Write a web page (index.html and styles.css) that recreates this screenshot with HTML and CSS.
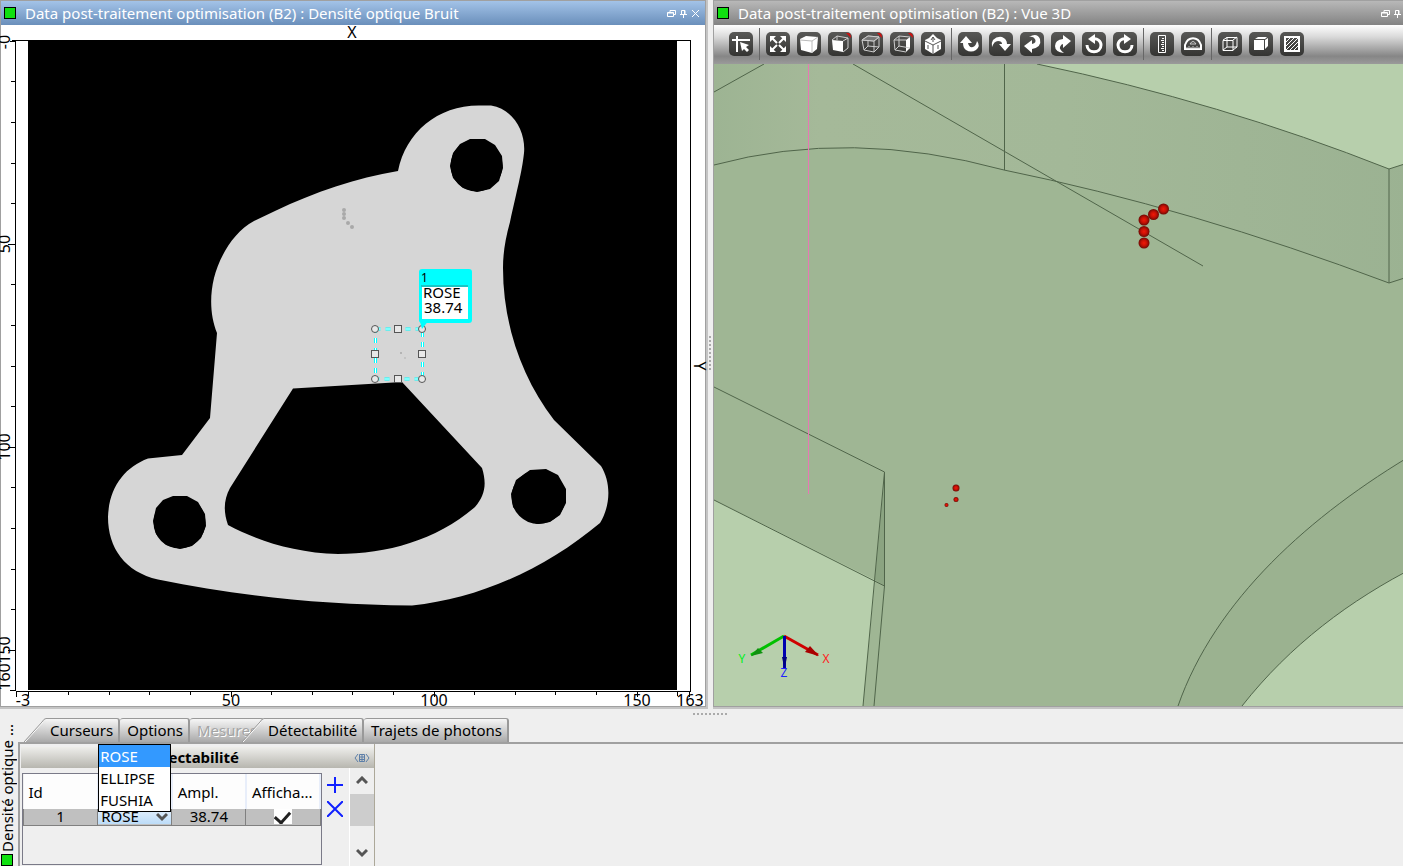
FILE: index.html
```html
<!DOCTYPE html>
<html lang="fr">
  <head>
    <meta charset="UTF-8" />
    <meta name="viewport" content="width=device-width, initial-scale=1.0" />
    <title>Data post-traitement optimisation (B2)</title>
    <link rel="stylesheet" href="styles.css">
  </head>
  <body>
    <main class="views">
      <!-- 2D view -->
      <section class="view view-2d">
        <header class="title-bar active">
          <span class="status"></span>
          <h2>Data post-traitement optimisation (B2) : Densité optique Bruit</h2>
          <div class="window-buttons">
            <button type="button" aria-label="Restaurer"><svg viewBox="0 0 9 9"><path d="M3 3V1.500H8.500V5.500H6.500M.5 3.500H6.500V7.500H.5ZM.5 4H6.500" /></svg></button>
            <button type="button" aria-label="Épingler"><svg viewBox="0 0 9 9"><path d="M2.500 5V1.500H6V5M5.500 1.500V5M1 5.500H8M4.500 5.500V9" /></svg></button>
            <button type="button" aria-label="Fermer"><svg viewBox="0 0 9 9"><path d="M1 1L8 8M8 1L1 8" /></svg></button>
          </div>
        </header>
        <svg class="plot" viewBox="1 25 704 681">
          <rect x="28" y="41" width="649" height="649" />
          <path class="part" fill-rule="evenodd" d="M398 171C406 132 438 105 480 105.500H491C514 109 526 133 524 153C522 172 517 190 510 222C505 240 503 254 503 268C503 325 522 378 554 420L601 466C611 482 611 505 600 523C545 569 478 599 412 605.500C320 605 240 596 158 579.500C125 572 108 548 108 517C109 487 125 467 148 458.500L182 455L210 418L217 333C211 318 209 299 214 278C219 258 233 232 254 221L275 211C315 192 356 178 398 171ZM293 388.500L402 382L482 468C487 484 485 495 475 507C437 540 387 554 338 554C295 553 258 541 228 525C223 511 224 499 230 488Z" />
          <circle cx="476.500" cy="165.500" r="26" /><circle cx="179.500" cy="522.500" r="26" /><circle cx="538.500" cy="497" r="27" />
          <path d="M470 139L485 139L495 145L502 156L503 168L499 181L490 189L477 192L463 188L453 178L450 166L453 153L460 144ZM173 496L187 496L198 502L205 514L206 526L201 538L192 546L180 549L166 545L156 534L153 521L156 508L163 500ZM530 470L546 469L558 475L566 489L566 503L560 515L550 522L537 524L523 518L513 507L511 494L516 480Z" />
          <g class="defects">
            <circle cx="344" cy="210" r="2" /><circle cx="344" cy="214" r="2" /><circle cx="344" cy="218" r="2" />
            <circle cx="348" cy="223" r="2" /><circle cx="352" cy="227" r="2" />
            <circle cx="401" cy="353" r="1" /><circle cx="405" cy="358" r="1" opacity=".5" />
          </g>
          <!-- rulers -->
          <path class="axis" d="M12 40.500H690.500V691.500H16M15.500 41V691M10 41.500H15M11 81.500H15M11 122.500H15M11 163.500H15M11 203.500H15M8 244.500H15M11 284.500H15M11 325.500H15M11 366.500H15M11 406.500H15M8 447.500H15M11 487.500H15M11 528.500H15M11 569.500H15M11 609.500H15M8 650.500H15M10 690.500H15M16.500 692V697M28.500 692V696M68.500 692V695M109.500 692V695M149.500 692V695M190.500 692V695M231.500 692V697M271.500 692V695M312.500 692V695M352.500 692V695M393.500 692V695M434.500 692V697M474.500 692V695M515.500 692V695M555.500 692V695M596.500 692V695M637.500 692V697M677.500 692V696M689.500 692V697" />
          <g class="labels">
            <text x="352" y="38">X</text>
            <text x="23" y="706">-3</text>
            <text x="231" y="706">50</text>
            <text x="434" y="706">100</text>
            <text x="637" y="706">150</text>
            <text x="690" y="706">163</text>
            <text transform="translate(10 42) rotate(-90)">-0</text>
            <text transform="translate(10 244) rotate(-90)">50</text>
            <text transform="translate(10 447) rotate(-90)">100</text>
            <text transform="translate(10 650) rotate(-90)">150</text>
            <text transform="translate(10 677) rotate(-90)">160</text>
            <text transform="translate(694 366) rotate(90)">Y</text>
          </g>
          <!-- selected zone and its label -->
          <rect class="zone-edge" x="375.500" y="329" width="47" height="50" />
          <rect class="zone" x="375.500" y="329" width="47" height="50" />
          <g class="handles">
            <rect x="394.500" y="325.500" width="7" height="7" /><rect x="394.500" y="375.500" width="7" height="7" />
            <rect x="371.500" y="350.500" width="7" height="7" /><rect x="418.500" y="350.500" width="7" height="7" />
            <circle cx="375" cy="329" r="3.500" /><circle cx="422" cy="329" r="3.500" />
            <circle cx="375" cy="379" r="3.500" /><circle cx="422" cy="379" r="3.500" />
          </g>
          <g class="callout">
            <path d="M419 318L422 329L429 320Z" />
            <rect x="419" y="269" width="53" height="54" rx="3" />
            <rect class="callout-body" x="422" y="287" width="46" height="32" />
            <path class="callout-rule" d="M421 286H468" />
            <text class="callout-id" x="421" y="282">1</text>
            <text x="423" y="298">ROSE</text>
            <text x="424" y="313">38.74</text>
          </g>
        </svg>
      </section>

      <div class="splitter"><span class="grip vertical"></span></div>

      <!-- 3D view -->
      <section class="view view-3d">
        <header class="title-bar">
          <span class="status"></span>
          <h2>Data post-traitement optimisation (B2) : Vue 3D</h2>
          <div class="window-buttons">
            <button type="button" aria-label="Restaurer"><svg viewBox="0 0 9 9"><path d="M3 3V1.500H8.500V5.500H6.500M.5 3.500H6.500V7.500H.5ZM.5 4H6.500" /></svg></button>
            <button type="button" aria-label="Épingler"><svg viewBox="0 0 9 9"><path d="M2.500 5V1.500H6V5M5.500 1.500V5M1 5.500H8M4.500 5.500V9" /></svg></button>
          </div>
        </header>
        <div class="toolbar">
          <div class="tools">
            <button type="button" aria-label="Sélection"><svg viewBox="0 0 24 24"><path class="thick" d="M3 8H21M8 4V20" /><path class="solid" d="M11 10L20 13L17 15L20 18L18 20L15 17L13 19Z" /></svg></button>
          </div>
          <div class="tools">
            <button type="button" aria-label="Ajuster"><svg viewBox="0 0 24 24"><path class="solid" d="M4 4H10L4 10ZM20 4H14L20 10ZM4 20H10L4 14ZM20 20H14L20 14Z" /><path class="thick" d="M6 6L11 11M18 6L13 11M6 18L11 13M18 18L13 13" /></svg></button>
            <button type="button" aria-label="Cube plein"><svg viewBox="0 0 24 24"><path class="solid" d="M3 7L9 4L21 5L20 17L15 21L4 18Z" /><path class="soft" d="M3 8L15 9L21 5M15 9V21" /></svg></button>
            <button type="button" aria-label="Face avant"><svg viewBox="0 0 24 24"><path class="solid" d="M4 8L15 9V20L5 18Z" /><path d="M4 8L9 4L20 6V16L15 20M15 9L20 6M9 4V8" /><path class="red" d="M18 1H20Q23 1 23 6Z" /></svg></button>
            <button type="button" aria-label="Filaire"><svg viewBox="0 0 24 24"><path d="M3 8L9 4L20 5L15 9ZM3 8L5 18L15 20L20 15V5M15 9V20M9 4L9 14L5 18M9 14L20 15" /><path class="dim-fill" d="M3 8L9 4L20 5L15 9Z" /><path class="red" d="M18 1H20Q23 1 23 6Z" /></svg></button>
            <button type="button" aria-label="Face droite"><svg viewBox="0 0 24 24"><path class="solid" d="M16 8L20 5V16L16 20Z" /><path d="M4 8L9 4L20 5M4 8L16 8M4 8L5 18L16 20M9 4V14L5 18M9 14L20 16" /><path class="red" d="M18 1H20Q23 1 23 6Z" /></svg></button>
            <button type="button" aria-label="Axes du cube"><svg viewBox="0 0 24 24"><path class="solid" d="M12 2L16 6L20 8V17L12 22L4 17V8L8 6Z" /><path class="dark" d="M4 9L12 13L20 9M12 13V22M10 8L12 5L14 8M12 5V10M7 13V17M17 13V17" /></svg></button>
          </div>
          <div class="tools">
            <button type="button" aria-label="Rotation gauche"><svg viewBox="0 0 24 24"><path class="solid" d="M8 4L14 11H10Q11 16 15 15Q18 14 19 9Q23 14 18 18Q13 21 8 18Q5 16 5 11H2Z" /></svg></button>
            <button type="button" aria-label="Rotation droite"><svg viewBox="0 0 24 24"><path class="solid" d="M16 19L22 12H18Q18 7 13 5Q8 4 4 8Q2 11 3 15Q5 9 9 9Q13 9 13 12H10Z" /></svg></button>
            <button type="button" aria-label="Bascule avant"><svg viewBox="0 0 24 24"><path class="solid" d="M4 14L12 8V12Q17 11 15 7Q13 4 9 5Q17 0 20 7Q22 15 12 17V21Z" /></svg></button>
            <button type="button" aria-label="Bascule arrière"><svg viewBox="0 0 24 24"><path class="solid" d="M20 9L12 3V7Q4 8 4 14Q4 20 13 21Q8 17 9 15Q10 12 12 12V16Z" /></svg></button>
            <button type="button" aria-label="Tourner à gauche"><svg viewBox="0 0 24 24"><path class="heavy" d="M5 13C5 22 19 22 19 13C19 9 15 6 11 7" /><path class="solid" d="M13 2V12L6 7Z" /></svg></button>
            <button type="button" aria-label="Tourner à droite"><svg viewBox="0 0 24 24"><path class="heavy" d="M19 13C19 22 5 22 5 13C5 9 9 6 13 7" /><path class="solid" d="M11 2V12L18 7Z" /></svg></button>
          </div>
          <div class="tools">
            <button type="button" aria-label="Règle"><svg viewBox="0 0 24 24"><path class="edge" d="M8.500 3.500H15.500V20.500H8.500Z" /><path class="edge" d="M12 6.500H14M11 8.500H14M12 10.500H14M11 12.500H14M12 14.500H14M11 16.500H14M12 18.500H14" /></svg></button>
            <button type="button" aria-label="Rapporteur"><svg viewBox="0 0 24 24"><path class="thick" d="M4 17V13C7 4 17 4 20 13V17Z" /><path d="M9 12Q12 7 15 12ZM6 15V17M8 14V17M10 15V17M12 14V17M14 15V17M16 14V17M18 15V17" /></svg></button>
          </div>
          <div class="tools">
            <button type="button" aria-label="Arêtes"><svg viewBox="0 0 24 24"><path class="edge" d="M5 8.500H15V18.500H5ZM5 8L9 5.500H19V15L15 18M15 8L19 5" /><path class="edge" d="M9 5V15H19M9 15L5 18" /></svg></button>
            <button type="button" aria-label="Faces"><svg viewBox="0 0 24 24"><path class="solid" d="M5 8H15V18H5ZM6 7L9 5H18L16 7ZM16 8L19 6V14L16 17Z" /></svg></button>
            <button type="button" aria-label="Hachures"><svg viewBox="0 0 24 24"><path class="thick" d="M5 5H19V19H5Z" /><path class="edge" d="M6 10L10 6M6 14L14 6M6 18L18 6M10 18L18 10M14 18L18 14" /></svg></button>
          </div>
        </div>
        <svg class="scene" viewBox="714 64 703 642" preserveAspectRatio="xMinYMin slice">
          <defs>
            <radialGradient id="ball">
              <stop offset="0" stop-color="#f01a08" />
              <stop offset=".5" stop-color="#c81005" />
              <stop offset="1" stop-color="#6c0b05" />
            </radialGradient>
            <linearGradient id="wall">
              <stop offset="0" stop-color="#9db493" />
              <stop offset=".15" stop-color="#a5b999" />
              <stop offset=".5" stop-color="#a3b898" />
              <stop offset="1" stop-color="#9bb292" />
            </linearGradient>
          </defs>
          <rect class="face" x="714" y="64" width="703" height="642" />
          <path fill="url(#wall)" d="M714 64H1037Q1220 102 1389 169L1417 160V274L1389 283Q1190 208 1004 170Q850 128 714 165Z" />
          <path class="light" d="M1037 64H1417V160L1389 169Q1220 102 1037 64Z" />
          <path class="light" d="M714 500L875 580L863 706H714Z" />
          <path class="shade" d="M885 472V586L875 580Z" />
          <path class="wall-low" d="M1178 706C1215 600 1310 515 1417 452V564C1350 600 1290 645 1242 706Z" />
          <path class="light" d="M1242 706C1290 645 1350 600 1417 566V706Z" />
          <path class="edges" d="M714 92L764 64M853 64L1203 266M1004.500 64V170M714 165Q850 128 1004 170Q1190 208 1389 283L1417 274M1037 64Q1220 102 1389 169L1417 160M1389 169V283M714 387L884.500 472V586L714 500M884.500 472L863 706M884.500 586L874 706M1178 706C1215 600 1310 515 1417 452M1242 706C1290 645 1350 600 1417 566" />
          <path class="ray" d="M808.500 64V494" />
          <g fill="url(#ball)">
            <circle cx="1163.500" cy="209" r="5.500" /><circle cx="1153.500" cy="214.500" r="5.500" />
            <circle cx="1144" cy="220" r="5.500" /><circle cx="1144" cy="231.500" r="5.500" />
            <circle cx="1144" cy="243" r="5.500" /><circle cx="956" cy="488" r="3.500" />
            <circle cx="956" cy="499.500" r="2.500" /><circle cx="946.500" cy="505" r="2" />
          </g>
          <g class="triad">
            <path class="axis-y" d="M784 636L751 655" /><path class="cone-y" d="M751 656L758 648L763 653Z" />
            <path class="axis-x" d="M784 636L818 655" /><path class="cone-x" d="M819 656L805 652L810 646Z" />
            <path class="axis-z" d="M784.500 636V668" /><path class="cone-z" d="M782 657H787L784.500 669Z" />
            <text class="name-y" x="742" y="663">Y</text>
            <text class="name-x" x="826" y="663">X</text>
            <text class="name-z" x="784" y="677">Z</text>
          </g>
        </svg>
      </section>
    </main>

    <!-- Parameters dock -->
    <section class="dock">
      <span class="grip horizontal"></span>
      <aside class="side-label">
        <span class="status"></span>
        <span class="side-text">Densité optique ...</span>
      </aside>
      <div class="dock-main">
        <nav class="tabs">
          <button type="button" class="tab">
            <svg class="slope" viewBox="0 0 22 24"><use href="#slope-shape" /></svg><span>Curseurs</span>
          </button>
          <button type="button" class="tab"><span>Options</span></button>
          <button type="button" class="tab" disabled><span>Mesures</span></button>
          <button type="button" class="tab selected">
            <svg class="slope" viewBox="0 0 22 24">
              <defs>
                <linearGradient id="tab-fill" x2="0" y2="1">
                  <stop offset="0" stop-color="#f6f6f6" />
                  <stop offset="1" stop-color="#a9a9a9" />
                </linearGradient>
                <g id="slope-shape">
                  <path fill="url(#tab-fill)" d="M0 24L18 4Q21 .5 22 .5V24Z" />
                  <path fill="none" stroke="#fff" d="M1 24L19 4" />
                  <path fill="none" stroke="#999" d="M0 24L18 4Q20 .5 22 .5" />
                </g>
              </defs>
              <use href="#slope-shape" />
            </svg><span>Détectabilité</span>
          </button>
          <button type="button" class="tab"><span>Trajets de photons</span></button>
        </nav>
        <div class="tab-page">
          <div class="detect">
            <header class="detect-head">
              <h3>Détectabilité</h3>
              <button type="button" aria-label="Colonnes"><svg viewBox="0 0 16 10"><path d="M4 1L1 5L4 9M12 1L15 5L12 9M5.500 1.500H10.500V8.500H5.500ZM5.500 4H10.500M5.500 6.500H10.500M8 1.500V8.500" /></svg></button>
            </header>
            <div class="detect-body">
              <div class="table-box">
                <table>
                  <thead>
                    <tr><th>Id</th><th></th><th>Ampl.</th><th>Afficha...</th></tr>
                  </thead>
                  <tbody>
                    <tr>
                      <td>1</td>
                      <td class="type-cell">
                        <select aria-label="Type">
                          <option>ROSE</option>
                          <option>ELLIPSE</option>
                          <option>FUSHIA</option>
                        </select>
                        <svg class="arrow" viewBox="0 0 12 10"><path d="M1 2L6 7L11 2" /></svg>
                        <ul class="menu">
                          <li class="current">ROSE</li>
                          <li>ELLIPSE</li>
                          <li>FUSHIA</li>
                        </ul>
                      </td>
                      <td>38.74</td>
                      <td><input type="checkbox" aria-label="Affichage" checked></td>
                    </tr>
                  </tbody>
                </table>
              </div>
              <div class="row-tools">
                <button type="button" aria-label="Ajouter"><svg viewBox="0 0 16 16"><path d="M8 0V16M0 8H16" /></svg></button>
                <button type="button" aria-label="Supprimer"><svg viewBox="0 0 16 16"><path d="M0 0L16 16M16 0L0 16" /></svg></button>
              </div>
              <div class="scrollbar">
                <button type="button" aria-label="Haut"><svg viewBox="0 0 12 10"><path d="M1 7L6 2L11 7" /></svg></button>
                <span class="thumb"></span>
                <button type="button" class="down" aria-label="Bas"><svg viewBox="0 0 12 10"><path d="M1 2L6 7L11 2" /></svg></button>
              </div>
            </div>
          </div>
        </div>
      </div>
    </section>
  </body>
</html>
```
FILE: styles.css
```css
* {
    box-sizing: border-box;
}
body {
    display: flex;
    flex-direction: column;
    height: 100vh;
    margin: 0;
    overflow: hidden;
    background: #efefef;
    color: #000;
    font-family: "Noto Sans", "Open Sans", sans-serif;
    font-size: 15px;
}
h2, h3, ul {
    margin: 0;
    padding: 0;
}
button {
    margin: 0;
    padding: 0;
    border: none;
    background: none;
    font: inherit;
    color: inherit;
}
svg {
    display: block;
}
.status {
    flex: none;
    width: 12px;
    height: 12px;
    border: 1px solid #000;
    background: #10e010;
}

/* Views */
.views {
    display: grid;
    flex: 1;
    grid-template-columns: 706fr 7px 690fr;
    min-height: 0;
}
.view {
    display: flex;
    flex-direction: column;
    min-width: 0;
    min-height: 0;
    border: 1px solid #a0a0a0;
    box-shadow: 1px 1px 0 1px #c4c4c4;
}
.view-2d {
    background: #fff;
}
.view-3d {
    margin-right: -15px;
}
.title-bar {
    display: flex;
    flex: none;
    align-items: center;
    gap: 9px;
    height: 24px;
    padding: 0 5px 0 3px;
    background: linear-gradient(#b8b8b8, #838383);
    color: #fff;
}
.title-bar.active {
    background: linear-gradient(#a3c3e8, #6a8fbb);
}
.title-bar h2 {
    flex: 1;
    font-size: 15px;
    font-weight: normal;
    line-height: 24px;
    white-space: nowrap;
}
.window-buttons {
    display: flex;
    gap: 3px;
}
.view-3d .window-buttons {
    padding-right: 10px;
}
.window-buttons svg {
    width: 9px;
    height: 9px;
    fill: none;
    stroke: #fff;
}
.plot {
    flex: 1;
    width: 100%;
    min-height: 0;
    overflow: visible;
}
.part {
    fill: #d6d6d6;
}
.defects {
    fill: #a9a9a9;
}
.axis {
    fill: none;
    stroke: #000;
    shape-rendering: crispEdges;
}
.labels {
    font-size: 16px;
    text-anchor: middle;
}
.zone-edge {
    fill: none;
    stroke: #00ffff;
    stroke-width: 3;
    stroke-dasharray: 5 5;
}
.zone {
    fill: none;
    stroke: #fff;
    stroke-dasharray: 5 5;
}
.handles {
    fill: #e8e8e8;
    stroke: #555;
}
.callout {
    fill: #00ffff;
}
.callout-body {
    fill: #fff;
}
.callout-rule {
    stroke: #2c8c8c;
}
.callout text {
    fill: #000;
    font-size: 15px;
}
.callout .callout-id {
    font-size: 12px;
}
.splitter {
    display: flex;
    align-items: center;
    justify-content: center;
}
.grip {
    width: 35px;
    height: 2px;
    background: repeating-linear-gradient(90deg, #aaa 0 2px, transparent 2px 4px);
}
.grip.vertical {
    width: 2px;
    height: 35px;
    background: repeating-linear-gradient(#aaa 0 2px, transparent 2px 4px);
}

/* 3D toolbar */
.toolbar {
    display: flex;
    flex: none;
    align-items: center;
    height: 39px;
    padding: 0 0 2px 9px;
    background: linear-gradient(#fff 0%, #dadada 30%, #868686 80%, #9a9a9a 100%);
}
.tools {
    display: flex;
    gap: 7px;
    padding: 4px 6px;
}
.tools + .tools {
    border-left: 1px solid #666;
}
.tools button {
    width: 24px;
    height: 24px;
    border-radius: 5px;
    background: linear-gradient(#585856, #343432);
}
.tools svg {
    width: 24px;
    height: 24px;
    fill: none;
    stroke: #ccc;
}
.tools .solid {
    fill: #fff;
    stroke: none;
}
.tools .thick {
    stroke: #fff;
    stroke-width: 2;
}
.tools .heavy {
    stroke: #fff;
    stroke-width: 3;
}
.tools .edge {
    stroke: #fff;
}
.tools .dark {
    stroke: #555;
}
.tools .soft {
    stroke: #bbb;
}
.tools .dim-fill {
    fill: #777;
}
.tools .red {
    fill: #d01010;
    stroke: none;
}

/* 3D scene */
.scene {
    flex: 1;
    width: 100%;
    min-height: 0;
}
.face {
    fill: #9fb694;
}
.light {
    fill: #b7cfac;
}
.shade {
    fill: #8ba481;
}
.wall-low {
    fill: #9bb290;
}
.edges {
    fill: none;
    stroke: #50654a;
}
.ray {
    stroke: #e778b4;
}
.triad path {
    stroke-width: 3;
}
.triad .axis-x {
    stroke: #d00000;
}
.triad .axis-y {
    stroke: #00c000;
}
.triad .axis-z {
    stroke: #0000b0;
}
.cone-x {
    fill: #a80000;
}
.cone-y {
    fill: #109010;
}
.cone-z {
    fill: #000080;
}
.triad text {
    font-size: 12px;
    text-anchor: middle;
}
.name-x {
    fill: #ff2020;
}
.name-y {
    fill: #00f020;
}
.name-z {
    fill: #2020ff;
}

/* Dock */
.dock {
    position: relative;
    display: flex;
    flex: none;
    padding-top: 11px;
}
.grip.horizontal {
    position: absolute;
    top: 6px;
    left: 50%;
    margin-left: -9px;
}
.side-label {
    display: flex;
    flex: none;
    flex-direction: column-reverse;
    align-items: flex-start;
    gap: 2px;
    width: 18px;
    padding-left: 1px;
}
.side-text {
    writing-mode: vertical-rl;
    transform: rotate(180deg);
    line-height: 12px;
    white-space: nowrap;
}
.dock-main {
    flex: 1;
    min-width: 0;
}
.tabs {
    display: flex;
    height: 24px;
    padding-left: 6px;
}
.tab {
    display: flex;
    height: 24px;
}
.tab span {
    height: 24px;
    padding: 0 5px 0 7px;
    border: 1px solid #999;
    border-width: 1px 2px 0 0;
    border-radius: 3px 3px 0 0;
    background: linear-gradient(#f6f6f6, #a9a9a9);
    line-height: 23px;
    white-space: nowrap;
}
.tab .slope {
    width: 22px;
    height: 24px;
}
.slope + span {
    padding-left: 4px;
    border-radius: 0 3px 0 0;
}
.tab:disabled {
    color: #a4a4a4;
    text-shadow: 1px 1px 0 #fff;
}
.tab.selected {
    z-index: 1;
    margin-left: -22px;
}
.tab-page {
    border: 2px solid #a0a0a0;
    border-width: 2px 0 0 2px;
}
.detect {
    width: 355px;
    padding: 3px 0 0 1px;
    border-right: 1px solid #aca899;
}
.detect-head {
    display: flex;
    align-items: center;
    height: 21px;
    padding-right: 4px;
    background: linear-gradient(#eeeeeb, #b7b6af);
}
.detect-head h3 {
    flex: 1;
    padding-left: 6px;
    font-size: 15px;
    line-height: 21px;
    text-align: center;
}
.detect-head svg {
    width: 16px;
    height: 10px;
    fill: none;
    stroke: #5c7fa8;
}
.detect-body {
    display: flex;
    height: 98px;
}
.table-box {
    flex: 1;
    margin: 5px 0 1px 1px;
    border: 1px solid #7a7a88;
}
table {
    width: 100%;
    border-collapse: collapse;
    table-layout: fixed;
}
th {
    height: 35px;
    padding: 0 5px;
    border-right: 2px solid #e8eefa;
    background: #fdfdfd;
    font-weight: normal;
    text-align: left;
    white-space: nowrap;
}
td {
    height: 16px;
    padding: 0;
    border: 1px solid #808080;
    border-top: none;
    background: #c0c0c0;
    line-height: 15px;
    text-align: center;
}
.type-cell {
    position: relative;
}
select {
    display: block;
    width: 100%;
    height: 15px;
    padding: 0 3px;
    border: none;
    border-radius: 0;
    background: linear-gradient(#e4f0fc, #bcdcf8);
    appearance: none;
    font: inherit;
    line-height: 15px;
}
.arrow, .scrollbar svg {
    width: 12px;
    height: 10px;
    fill: none;
    stroke: #555;
    stroke-width: 3;
}
.arrow {
    position: absolute;
    top: 3px;
    right: 3px;
}
.menu {
    position: absolute;
    bottom: 13px;
    left: 0;
    width: 100%;
    border: 1px solid #000;
    background: #fff;
    line-height: 22px;
    list-style: none;
    text-align: left;
}
.menu li {
    padding-left: 1px;
}
.menu .current {
    background: #3399ff;
    color: #fff;
}
input[type="checkbox"] {
    display: block;
    width: 18px;
    height: 15px;
    margin: 0 auto;
    overflow: hidden;
    background: #fff;
    appearance: none;
}
input[type="checkbox"]:checked::before {
    content: "";
    display: block;
    width: 12px;
    height: 7px;
    margin: 2px auto 0;
    border: solid #222;
    border-width: 0 0 3px 3px;
    transform: rotate(-48deg);
}
.row-tools {
    display: flex;
    flex-direction: column;
    gap: 8px;
    padding: 9px 6px 0 5px;
}
.row-tools svg {
    width: 16px;
    height: 16px;
    fill: none;
    stroke: #1020ff;
    stroke-width: 2;
}
.scrollbar {
    display: flex;
    flex-direction: column;
    width: 25px;
    border-left: 1px solid #fff;
}
.scrollbar button {
    display: flex;
    align-items: center;
    justify-content: center;
    height: 26px;
}
.thumb {
    height: 32px;
    background: #cdcdcd;
}
.scrollbar .down {
    margin-top: auto;
}
```
